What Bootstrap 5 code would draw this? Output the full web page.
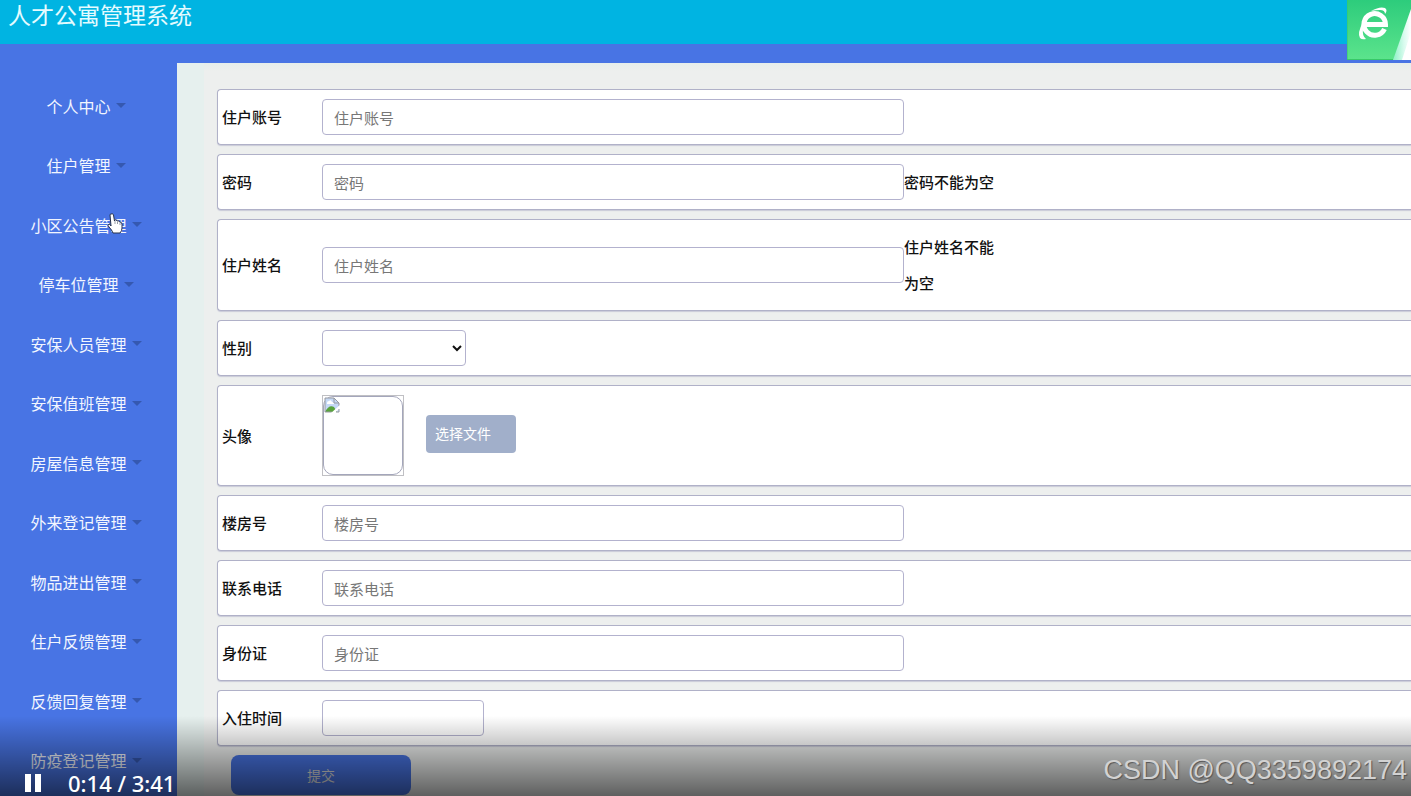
<!DOCTYPE html>
<html lang="zh-CN">
<head>
<meta charset="utf-8">
<meta name="viewport" content="width=device-width, initial-scale=1">
<title>人才公寓管理系统</title>
<link href="https://cdn.jsdelivr.net/npm/bootstrap@5.3.0/dist/css/bootstrap.min.css" rel="stylesheet">
<style>
body{font-family:"Noto Sans CJK SC",sans-serif;background:#4874e4}
.topbar{background:#00b4e2;height:44px;padding:0 8px}
.topbar h1{font-size:23px;line-height:28px;font-weight:400;color:#e4fbff}
.body-row{min-height:0}
.side{width:177px;padding:32px 5px 6px 0}
.side a{color:#f2f6ff;font-size:16px;line-height:24px}
.side a::after{color:#3558b0;margin-left:5px;border-top-width:5px;border-left-width:5px;border-right-width:5px}
.stage{background:#e6f0ee;margin-top:19px;padding-left:27px;min-width:0}
.sheet{background:linear-gradient(#e6eeeb,#edefee 8px);padding:26px 0 1px 13px;row-gap:9px}
.line{background:#fff;border:1px solid #b0b1c8;border-right:0;border-radius:4px 0 0 4px;padding:9px 0 9px 4px;box-shadow:0 1px 1px #c9cad8}
.line,.field{font-size:15px;line-height:36px;color:#111}
.line>label,.line>.caption{width:100px;font-weight:500;flex:none}
.field{height:36px;border:1px solid #b3b2ce;border-radius:4px;background:#fff;padding:0 11px;line-height:24px}
.field::placeholder{color:#777;opacity:1}
.wide{flex:0 1 582px;min-width:0}
.gender{width:144px;padding:0 4px}
.day{width:162px}
.hint{max-width:92px;font-weight:500}
.photo{width:82px;height:81px;border:1px solid #c0c0c4}
.photo div{height:100%;border:1px solid #a4a6bb;border-radius:10px}
.photo svg{display:block}
.pick{margin:0 0 4px 22px;width:90px;height:38px;background:#a1afca;color:#fff;border-radius:4px;font-size:14px;padding:0 9px;text-align:left}
.send{width:180px;height:40px;margin-left:14px;background:#4874e4;color:#ddd;border-radius:8px;font-size:14px}
.shade{height:80px;background:linear-gradient(rgba(0,0,0,0),rgba(0,0,0,.6));pointer-events:none}
.player{left:25px;bottom:0;color:#fff;font:500 22px/26px "Noto Sans",sans-serif;gap:27px}
.watermark{right:4px;bottom:8px;color:#d2d2d2;font:27px/36px "Liberation Sans",sans-serif;text-shadow:1px 1px 1px #555}
.pointer{left:107px;top:212px}
</style>
</head>
<body>
<div class="d-flex flex-column vh-100 position-relative overflow-hidden">
<header class="topbar flex-shrink-0"><h1 class="m-0">人才公寓管理系统</h1></header>
<div class="body-row d-flex flex-fill">
<nav class="side d-flex flex-column flex-shrink-0">
<a class="dropdown-toggle text-decoration-none flex-fill d-flex align-items-center justify-content-center" href="#">个人中心</a>
<a class="dropdown-toggle text-decoration-none flex-fill d-flex align-items-center justify-content-center" href="#">住户管理</a>
<a class="dropdown-toggle text-decoration-none flex-fill d-flex align-items-center justify-content-center" href="#">小区公告管理</a>
<a class="dropdown-toggle text-decoration-none flex-fill d-flex align-items-center justify-content-center" href="#">停车位管理</a>
<a class="dropdown-toggle text-decoration-none flex-fill d-flex align-items-center justify-content-center" href="#">安保人员管理</a>
<a class="dropdown-toggle text-decoration-none flex-fill d-flex align-items-center justify-content-center" href="#">安保值班管理</a>
<a class="dropdown-toggle text-decoration-none flex-fill d-flex align-items-center justify-content-center" href="#">房屋信息管理</a>
<a class="dropdown-toggle text-decoration-none flex-fill d-flex align-items-center justify-content-center" href="#">外来登记管理</a>
<a class="dropdown-toggle text-decoration-none flex-fill d-flex align-items-center justify-content-center" href="#">物品进出管理</a>
<a class="dropdown-toggle text-decoration-none flex-fill d-flex align-items-center justify-content-center" href="#">住户反馈管理</a>
<a class="dropdown-toggle text-decoration-none flex-fill d-flex align-items-center justify-content-center" href="#">反馈回复管理</a>
<a class="dropdown-toggle text-decoration-none flex-fill d-flex align-items-center justify-content-center" href="#">防疫登记管理</a>
</nav>
<main class="stage flex-fill">
<form class="sheet d-grid h-100 align-content-start">
<div class="line d-flex align-items-center"><label for="acc">住户账号</label><input class="field wide" id="acc" type="text" placeholder="住户账号"></div>
<div class="line d-flex align-items-center"><label for="pwd">密码</label><input class="field wide" id="pwd" type="password" placeholder="密码"><span class="hint">密码不能为空</span></div>
<div class="line d-flex align-items-center"><label for="nam">住户姓名</label><input class="field wide" id="nam" type="text" placeholder="住户姓名"><span class="hint">住户姓名不能为空</span></div>
<div class="line d-flex align-items-center"><label for="sex">性别</label><select class="field gender" id="sex"><option></option></select></div>
<div class="line d-flex align-items-center"><span class="caption">头像</span>
<div class="photo"><div>
<svg width="16" height="16" viewBox="0 0 16 16" aria-hidden="true"><path d="M1 1h9l5 5v9H1z" fill="#c5d8f5"/><path d="M3 6q0-2 2-2 2-2 3 1 2 0 2 2H3z" fill="#fff"/><path d="M1 15q4-8 9-5l3 5z" fill="#58a33c"/><path d="M1 15V1h9l5 5v3M10 1v5h5M1 15h7" fill="none" stroke="#9699a0"/><path d="M7 16 16 8v3l-5 5z" fill="#fff"/><path d="M12 15h3v-3" fill="none" stroke="#9699a0"/></svg>
</div></div>
<button class="btn border-0 pick" type="button">选择文件</button></div>
<div class="line d-flex align-items-center"><label for="bld">楼房号</label><input class="field wide" id="bld" type="text" placeholder="楼房号"></div>
<div class="line d-flex align-items-center"><label for="tel">联系电话</label><input class="field wide" id="tel" type="text" placeholder="联系电话"></div>
<div class="line d-flex align-items-center"><label for="idc">身份证</label><input class="field wide" id="idc" type="text" placeholder="身份证"></div>
<div class="line d-flex align-items-center"><label for="day">入住时间</label><input class="field day" id="day" type="text"></div>
<button class="btn border-0 p-0 send" type="submit">提交</button>
</form>
</main>
</div>

<!-- browser badge over the top right corner -->
<svg class="position-absolute top-0 end-0" width="64" height="60" viewBox="0 0 64 60" aria-hidden="true">
<defs><linearGradient id="g" x1="0" y1="0" x2="0" y2="1"><stop offset="0" stop-color="#2dcc7c"/><stop offset="1" stop-color="#5ce48c"/></linearGradient><linearGradient id="w" x1="0" y1="0" x2="1" y2="0"><stop offset="0" stop-color="#8cf0c4"/><stop offset=".6" stop-color="#d8fbee"/><stop offset="1" stop-color="#fff"/></linearGradient></defs>
<path d="M0 0h64v60H0z" fill="url(#g)"/><path d="M64 9v51H46z" fill="url(#w)"/><path d="M64 32v28h-9z" fill="#fff"/><path d="M0 0v59.500h46" fill="none" stroke="#38c868"/>
<path d="M37.500 29A10.800 10.800 0 1 1 38.500 24.500H18" fill="none" stroke="#fff" stroke-width="5"/>
<path d="M24 11q9-5 14-3 3 2 0 6 0-4-5-4-4 0-9 1z" fill="#fff"/><path d="M16 22q-6 11-3 16 2 2 6 1-4-3-3-10z" fill="#fff"/>
</svg>

<svg class="pointer position-absolute" width="17" height="22" viewBox="0 0 17 22" aria-hidden="true"><path d="M4 2q2-1 2.500 1l1 6V8q2-1 2.500 1 2-1 2.500 1 2-.500 2.500 2v4q0 3-2 5H6q-1-3-4-6-2-2 0-3 1 0 2 2L3 3q0-1 1-1z" fill="#fff" stroke="#26324d"/><path d="M8 9v3M10.500 10v2M13 11v2" stroke="#7f8795" stroke-width=".8"/></svg>

<div class="shade position-absolute bottom-0 start-0 w-100"></div>
<div class="player position-absolute d-flex align-items-center"><svg width="16" height="18" viewBox="0 0 16 18" aria-hidden="true"><path d="M0 0h6v18H0zM10 0h6v18h-6z" fill="#fff"/></svg><span>0:14 / 3:41</span></div>
<div class="watermark position-absolute">CSDN @QQ3359892174</div>
</div>
<script src="https://cdn.jsdelivr.net/npm/bootstrap@5.3.0/dist/js/bootstrap.bundle.min.js"></script>
</body>
</html>
